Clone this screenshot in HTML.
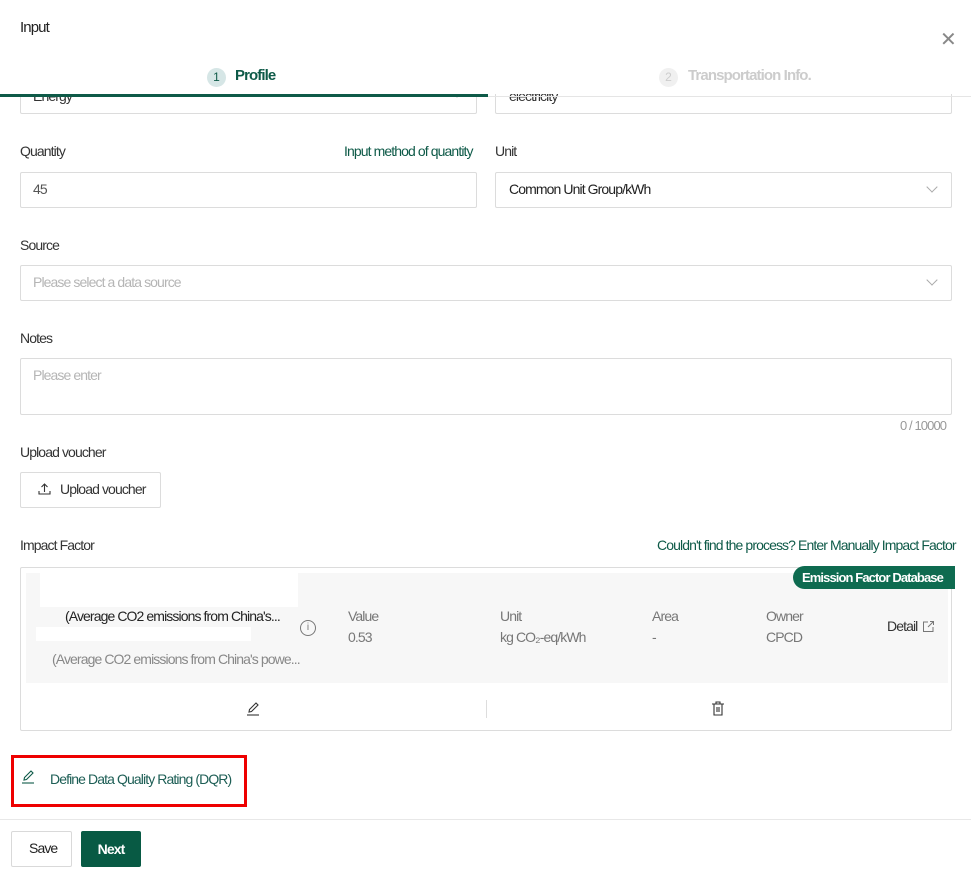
<!DOCTYPE html>
<html><head><meta charset="utf-8"><style>
*{box-sizing:border-box;margin:0;padding:0}
body{width:971px;height:870px;background:#fff;font-family:"Liberation Sans",sans-serif;font-size:14px;letter-spacing:-0.9px;color:#333;position:relative;overflow:hidden}
.a{position:absolute;white-space:nowrap}
.box{position:absolute;border:1px solid #dcdcdc;border-radius:2px;background:#fff}
.chev{position:absolute;width:8px;height:8px;border-right:1px solid #aaa;border-bottom:1px solid #aaa;transform:rotate(45deg)}
.g{color:#0e5a48}
.ph{color:#b5b5b5}
</style></head><body>
<!-- clipped inputs (behind header) -->
<div class="box" style="left:20px;top:70px;width:457px;height:44px"></div>
<div class="a" style="left:33px;top:88px;color:#333">Energy</div>
<div class="chev" style="left:453px;top:88px"></div>
<div class="box" style="left:495px;top:70px;width:457px;height:44px"></div>
<div class="a" style="left:509px;top:88px;color:#333">electricity</div>
<!-- header -->
<div class="a" style="left:0;top:0;width:971px;height:94px;background:#fff"></div>
<div class="a" style="left:20px;top:19px;font-size:15px;color:#222">Input</div>
<div class="a" style="left:940px;top:27px;font-size:20px;color:#888;letter-spacing:0">✕</div>
<div class="a" style="left:207px;top:68px;width:19px;height:19px;border-radius:50%;background:#d6e6e6;color:#0e5a48;font-size:12px;text-align:center;line-height:19px;letter-spacing:0">1</div>
<div class="a g" style="left:235px;top:67px;font-size:15px;font-weight:bold">Profile</div>
<div class="a" style="left:659px;top:68px;width:19px;height:19px;border-radius:50%;background:#f0f0f0;color:#ccc;font-size:12px;text-align:center;line-height:19px;letter-spacing:0">2</div>
<div class="a" style="left:688px;top:67px;font-size:15px;font-weight:bold;color:#ccc">Transportation Info.</div>
<div class="a" style="left:0;top:94px;width:488px;height:3px;background:#0e5a48"></div>
<div class="a" style="left:488px;top:96px;width:483px;height:1px;background:#e5e5e5"></div>
<!-- quantity -->
<div class="a" style="left:20px;top:143px">Quantity</div>
<div class="a g" style="left:344px;top:143px">Input method of quantity</div>
<div class="a" style="left:495px;top:143px">Unit</div>
<div class="box" style="left:20px;top:172px;width:457px;height:36px"></div>
<div class="a" style="left:33px;top:181px;color:#555">45</div>
<div class="box" style="left:495px;top:172px;width:457px;height:36px"></div>
<div class="a" style="left:509px;top:181px;color:#222">Common Unit Group/kWh</div>
<div class="chev" style="left:928px;top:183px"></div>
<!-- source -->
<div class="a" style="left:20px;top:237px">Source</div>
<div class="box" style="left:20px;top:265px;width:932px;height:36px"></div>
<div class="a ph" style="left:33px;top:274px">Please select a data source</div>
<div class="chev" style="left:928px;top:276px"></div>
<!-- notes -->
<div class="a" style="left:20px;top:330px">Notes</div>
<div class="box" style="left:20px;top:358px;width:932px;height:57px"></div>
<div class="a ph" style="left:33px;top:367px">Please enter</div>
<div class="a" style="left:900px;top:418px;color:#999;font-size:13px">0 / 10000</div>
<!-- upload -->
<div class="a" style="left:20px;top:444px">Upload voucher</div>
<div class="box" style="left:20px;top:472px;width:141px;height:36px"></div>
<svg class="a" style="left:38px;top:483px" width="13" height="12" viewBox="0 0 13 12" fill="none" stroke="#333" stroke-width="1.1"><path d="M6.5 9 V1 M3.5 4 L6.5 1 L9.5 4 M1 8 V11 H12 V8"/></svg>
<div class="a" style="left:60px;top:481px;color:#333">Upload voucher</div>
<!-- impact -->
<div class="a" style="left:20px;top:537px">Impact Factor</div>
<div class="a g" style="left:657px;top:537px">Couldn't find the process? Enter Manually Impact Factor</div>
<div class="box" style="left:20px;top:567px;width:932px;height:164px"></div>
<div class="a" style="left:26px;top:573px;width:922px;height:110px;background:#f7f7f7"></div>
<div class="a" style="left:40px;top:573px;width:258px;height:34px;background:#fff"></div>
<div class="a" style="left:36px;top:627px;width:215px;height:14px;background:#fff"></div>
<div class="a" style="left:793px;top:566px;width:162px;height:23px;background:#0e6b50;border-radius:12px 0 0 12px;color:#fff;font-weight:bold;font-size:13px;line-height:23px;padding-left:9px">Emission Factor Database</div>
<div class="a" style="left:65px;top:608px;color:#222">(Average CO2 emissions from China's...</div>
<div class="a" style="left:52px;top:651px;color:#888">(Average CO2 emissions from China's powe...</div>
<div class="a" style="left:300px;top:620px;width:16px;height:16px;border:1px solid #777;border-radius:50%;font-size:10px;text-align:center;line-height:14px;color:#777;letter-spacing:0">i</div>
<div class="a" style="left:348px;top:608px;color:#777">Value</div>
<div class="a" style="left:348px;top:629px;color:#777">0.53</div>
<div class="a" style="left:500px;top:608px;color:#777">Unit</div>
<div class="a" style="left:500px;top:629px;color:#777">kg CO₂-eq/kWh</div>
<div class="a" style="left:652px;top:608px;color:#777">Area</div>
<div class="a" style="left:652px;top:629px;color:#777">-</div>
<div class="a" style="left:766px;top:608px;color:#777">Owner</div>
<div class="a" style="left:766px;top:629px;color:#777">CPCD</div>
<div class="a" style="left:887px;top:618px;color:#333">Detail</div>
<svg class="a" style="left:922px;top:620px" width="13" height="13" viewBox="0 0 13 13" fill="none" stroke="#777" stroke-width="1"><path d="M6 2 H1.5 V11.5 H11 V7 M8 1.5 H11.5 V5 M11.5 1.5 L6 7"/></svg>
<div class="a" style="left:486px;top:700px;width:1px;height:18px;background:#ddd"></div>
<svg class="a" style="left:246px;top:701px" width="15" height="15" viewBox="0 0 15 15" fill="none" stroke="#333" stroke-width="1.1"><path d="M3 11 L3.5 8.5 L10 2 L12 4 L5.5 10.5 Z"/><path d="M1 14 H13"/></svg>
<svg class="a" style="left:711px;top:701px" width="14" height="15" viewBox="0 0 14 15" fill="none" stroke="#333" stroke-width="1.1"><path d="M1 3 H13 M5 3 V1 H9 V3 M3 3 V14 H11 V3 M6 6 V11 M8 6 V11"/></svg>
<!-- DQR -->
<div class="a" style="left:11px;top:755px;width:236px;height:52px;border:3px solid #ee0000"></div>
<svg class="a" style="left:21px;top:769px" width="15" height="15" viewBox="0 0 15 15" fill="none" stroke="#0e5a48" stroke-width="1.1"><path d="M3 11 L3.5 8.5 L10 2 L12 4 L5.5 10.5 Z"/><path d="M1 14 H13"/></svg>
<div class="a" style="left:50px;top:771px;color:#1d5e55">Define Data Quality Rating (DQR)</div>
<div class="a" style="left:0;top:819px;width:971px;height:1px;background:#e8e8e8"></div>
<div class="box" style="left:11px;top:831px;width:61px;height:36px;border-color:#d9d9d9"></div>
<div class="a" style="left:29px;top:840px;color:#222">Save</div>
<div class="a" style="left:81px;top:831px;width:60px;height:36px;background:#085a44;border-radius:2px;color:#fff;font-weight:bold;text-align:center;line-height:36px">Next</div>
</body></html>
